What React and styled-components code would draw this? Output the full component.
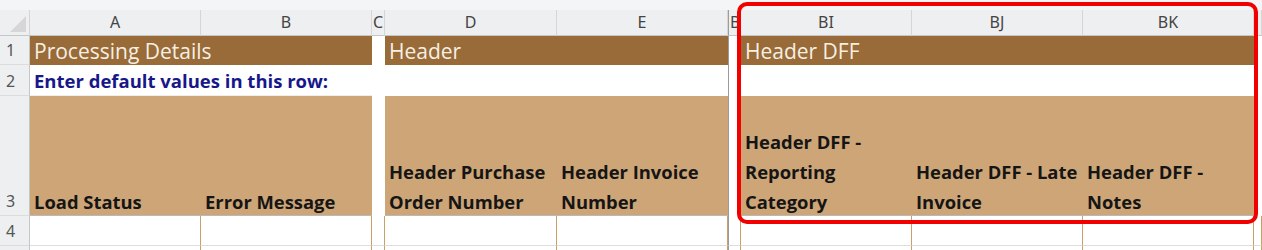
import React from 'react';
import styled, { createGlobalStyle, css } from 'styled-components';

const GlobalStyle = createGlobalStyle`
  html, body {
    margin: 0;
    padding: 0;
    background: #ffffff;
  }
  body {
    font-family: "Open Sans", Lato, sans-serif;
    width: 1262px;
    height: 250px;
    overflow: hidden;
  }
`;

const Page = styled.div`
  position: relative;
  width: 1262px;
  height: 250px;
  overflow: hidden;
  background: #ffffff;
`;

const Strip = styled.div`
  height: 10px;
  background: #f4f5f6;
`;

const Sheet = styled.div`
  display: grid;
  grid-template-columns: 30px 171px 171px 13px 172px 171px 13px 171px 171px 171px 8px;
  grid-template-rows: 26px 29px 31px 120px 30px 10px;
`;

const Corner = styled.div`
  position: relative;
  background: #eeeff0;
  border-right: 1px solid #d4d4d4;
  border-bottom: 1px solid #c6c6c6;
  &::after {
    content: '';
    position: absolute;
    right: 3px;
    bottom: 3px;
    border-style: solid;
    border-width: 0 0 16px 16px;
    border-color: transparent transparent #d6d6d6 transparent;
  }
`;

const ColHead = styled.div`
  background: #eeeff0;
  border-right: 1px solid #d6d6d6;
  border-bottom: 1px solid #c6c6c6;
  color: #444444;
  font-family: "Noto Sans", "Open Sans", sans-serif;
  font-size: 16px;
  line-height: 25px;
  text-align: ${({ $narrow }) => ($narrow ? 'left' : 'center')};
  padding-left: ${({ $narrow }) => ($narrow ? '1px' : '0')};
  overflow: hidden;
  white-space: nowrap;
  ${({ $freeze }) => $freeze && css`border-left: 1px solid #9c9c9c;`}
`;

const RowHead = styled.div`
  background: #eeeff0;
  border-right: 1px solid #c6c6c6;
  border-bottom: 1px solid #dcdcdc;
  color: #555555;
  font-family: "Noto Sans", "Open Sans", sans-serif;
  font-size: 16px;
  display: flex;
  align-items: flex-end;
  padding: 0 0 3px 6px;
`;

const fills = {
  dark: '#986b38',
  tan: '#cda577',
  white: '#ffffff',
};

const Cell = styled.div`
  background: ${({ $fill }) => fills[$fill]};
  grid-column: ${({ $span }) => ($span ? `span ${$span}` : 'auto')};
  white-space: nowrap;
  overflow: visible;
  min-width: 0;
  ${({ $freeze }) => $freeze && css`border-left: 1px solid #9c9c9c;`}
`;

const SectionCell = styled(Cell)`
  color: #f6efe4;
  font-size: 21px;
  line-height: 30px;
  padding-left: 4px;
`;

const NoteCell = styled(Cell)`
  color: #17178a;
  font-weight: 700;
  font-size: 18.5px;
  line-height: 32px;
  padding-left: 4px;
  border-bottom: 1px solid #eeeeee;
`;

const LabelCell = styled(Cell)`
  display: flex;
  flex-direction: column;
  justify-content: flex-end;
  gap: 4px;
  padding: 0 0 0 4px;
  border-bottom: 1px solid #b9b9b9;
  color: #151515;
  font-weight: 700;
  font-size: 18.4px;
  line-height: 26px;
`;

const EntryCell = styled(Cell)`
  border-right: 1px solid ${({ $edge }) => ($edge ? '#c9a06c' : 'transparent')};
  border-bottom: 1px solid #dedede;
`;

const Highlight = styled.div`
  position: absolute;
  left: 737px;
  top: 2px;
  width: 521px;
  height: 222px;
  box-sizing: border-box;
  border: 4px solid #f20000;
  border-radius: 10px;
  pointer-events: none;
`;

const columns = [
  { key: 'A', label: 'A' },
  { key: 'B', label: 'B' },
  { key: 'C', label: 'C', narrow: true },
  { key: 'D', label: 'D' },
  { key: 'E', label: 'E' },
  { key: 'BH', label: 'B', narrow: true, freeze: true },
  { key: 'BI', label: 'BI' },
  { key: 'BJ', label: 'BJ' },
  { key: 'BK', label: 'BK' },
  { key: 'BL', label: '', narrow: true },
];

const labels = {
  A: ['Load Status'],
  B: ['Error Message'],
  D: ['Header Purchase', 'Order Number'],
  E: ['Header Invoice', 'Number'],
  BI: ['Header DFF -', 'Reporting', 'Category'],
  BJ: ['Header DFF - Late', 'Invoice'],
  BK: ['Header DFF -', 'Notes'],
};

const App = () => {
  return (
    <>
      <GlobalStyle />
      <Page>
        <Strip />
        <Sheet>
          <Corner />
          {columns.map((c) => (
            <ColHead key={c.key} $narrow={c.narrow} $freeze={c.freeze}>{c.label}</ColHead>
          ))}

          <RowHead>1</RowHead>
          <SectionCell $fill="dark" $span={2}>Processing Details</SectionCell>
          <Cell $fill="white" />
          <SectionCell $fill="dark" $span={2}>Header</SectionCell>
          <Cell $fill="white" $freeze />
          <SectionCell $fill="dark" $span={3}>Header DFF</SectionCell>
          <Cell $fill="white" />

          <RowHead>2</RowHead>
          <NoteCell $fill="white" $span={2}>Enter default values in this row:</NoteCell>
          <Cell $fill="white" />
          <Cell $fill="white" $span={2} />
          <Cell $fill="white" $freeze />
          <Cell $fill="white" $span={3} />
          <Cell $fill="white" />

          <RowHead>3</RowHead>
          {columns.map((c) =>
            c.narrow ? (
              <Cell key={c.key} $fill="white" $freeze={c.freeze} />
            ) : (
              <LabelCell key={c.key} $fill="tan">
                {labels[c.key].map((line) => (
                  <span key={line}>{line}</span>
                ))}
              </LabelCell>
            )
          )}

          <RowHead>4</RowHead>
          {columns.map((c) => (
            <EntryCell key={c.key} $fill="white" $edge $freeze={c.freeze} />
          ))}

          <RowHead />
          {columns.map((c) => (
            <EntryCell key={c.key} $fill="white" $edge $freeze={c.freeze} />
          ))}
        </Sheet>
        <Highlight />
      </Page>
    </>
  );
};

export default App;
